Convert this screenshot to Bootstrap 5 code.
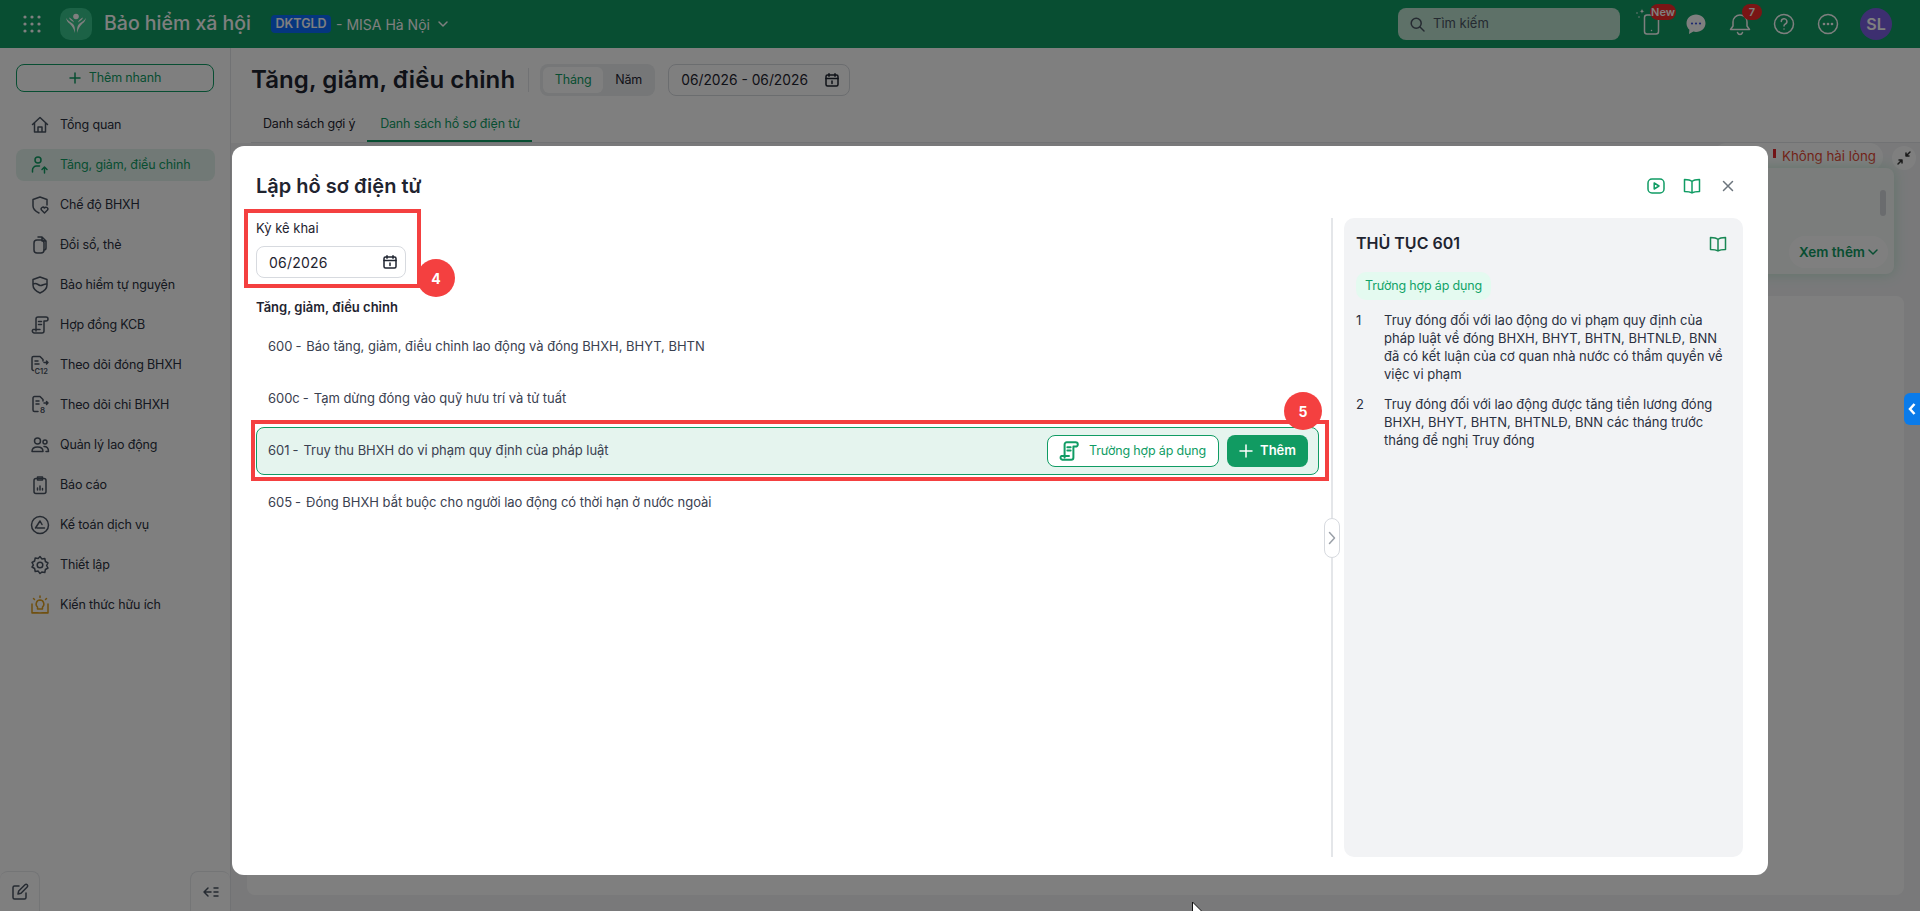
<!DOCTYPE html>
<html lang="vi">
<head>
  <meta charset="UTF-8" />
  <meta name="viewport" content="width=device-width, initial-scale=1.0"/>
  <title>Bảo hiểm xã hội</title>
  <link href="https://cdn.jsdelivr.net/npm/bootstrap@5.3.0/dist/css/bootstrap.min.css" rel="stylesheet">
  <style>
    html, body { height: 100%; overflow: hidden; }
    body { font-family: Inter, "Liberation Sans", sans-serif; font-size: 13px; color: #1f2430; background: #f2f3f5; }
    svg { display: block; flex: none; overflow: visible; }
    .ic { fill: none; stroke: currentColor; stroke-width: 1.5; stroke-linecap: round; stroke-linejoin: round; }
    .ic text { fill: currentColor; stroke: none; font-family: Inter, "Liberation Sans", sans-serif; font-weight: 600; }
    .txt-sm { font-size: 12.5px; letter-spacing: -.15px; white-space: nowrap; }

    .top-bar { height: 48px; background: #109c64; color: #fff; padding: 0 28px 0 23px; }
    .app-name { font-size: 19.5px; font-weight: 500; margin: 0 20px 0 12px; }
    .app-logo { width: 32px; height: 32px; border-radius: 10px; background: #38c48c; margin-left: 19px; }
    .org-tag { background: #0a6cff; border-radius: 4px; font-size: 12.5px; font-weight: 600; line-height: 18px; width: 60px; text-align: center; }
    .org-name { font-size: 14px; margin: 0 8px 0 5px; }
    .search-box { width: 222px; height: 32px; border-radius: 8px; background: #bce2d0; color: #4b5563; padding: 0 12px; gap: 8px; }
    .top-icons { gap: 16px; margin-left: 18px; }
    .top-icon { position: relative; width: 28px; height: 28px; }
    .red-badge { position: absolute; top: -6px; background: #f52a2a; color: #fff; font-size: 11px; font-weight: 600; line-height: 16px; border-radius: 8px; text-align: center; }
    .avatar-sl { width: 32px; height: 32px; border-radius: 50%; background: #7a5fe0; font-size: 16px; font-weight: 600; margin-left: 2px; }

    .side-bar { width: 231px; background: #fff; border-right: 1px solid #e2e4e8; position: relative; padding: 16px 15px 0 16px; }
    .quick-btn { height: 28px; width: 198px; border: 1px solid #109c64; border-radius: 8px; color: #109c64; gap: 8px; margin-bottom: 17px; }
    .side-item { height: 32px; margin-bottom: 8px; padding-left: 16px; gap: 10px; border-radius: 8px; color: #2a3040; }
    .side-item svg { width: 20px; height: 20px; color: #4b5563; margin-left: -2px; }
    .side-item.is-on { background: #e3f3ec; color: #109c64; }
    .side-item.is-on svg { color: #109c64; }
    .side-foot { position: absolute; left: 0; right: 0; bottom: 0; }
    .foot-btn { width: 40px; height: 40px; border: 1px solid #e8eaed; border-bottom: 0; border-radius: 8px 8px 0 0; color: #4b5563; }

    .page-head { height: 95px; background: #fff; padding: 16px 0 0 20px; }
    .page-title { font-size: 24px; font-weight: 600; margin: 0; letter-spacing: .1px; }
    .head-sep { width: 1px; height: 24px; background: #e2e4e8; margin: 0 11px 0 13px; }
    .seg-box { width: 115px; height: 32px; background: #eceef0; border-radius: 8px; padding: 3px; }
    .seg-on { width: 60px; height: 26px; background: #fff; border-radius: 6px; color: #109c64; }
    .seg-off { margin-left: 12px; }
    .range-box { width: 182px; height: 32px; border: 1px solid #d7dadf; border-radius: 8px; margin-left: 13px; padding: 0 10px 0 12px; font-size: 13.8px; }
    .tab-line { margin-top: 12px; border-bottom: 1px solid #e2e4e8; }
    .tab-it { padding: 0 12px; height: 34px; line-height: 32px; }
    .tab-it.is-on { color: #109c64; border-bottom: 2px solid #109c64; width: 165px; text-align: center; }

    .main-area { position: relative; }
    .rate-chip { position: absolute; top: 95px; right: 37px; width: 170px; height: 28px; border-radius: 14px; background: #fff; color: #e5432d; font-size: 13.3px; padding-right: 7px; justify-content: flex-end; gap: 6px; }
    .rate-bar { width: 3px; height: 9px; background: #e5252a; margin-top: -8px; }
    .mini-round { position: absolute; top: 98px; right: 4px; width: 24px; height: 24px; border-radius: 50%; background: #fff; color: #333; }
    .hint-card { position: absolute; top: 120px; right: 26px; width: 600px; height: 106px; border-radius: 8px; background: #f7fbf9; box-shadow: 0 0 14px #bfe8d3; }
    .more-pill { position: absolute; right: 6px; bottom: 6px; width: 99px; height: 32px; border-radius: 16px; background: #fff; color: #109c64; font-size: 13.5px; font-weight: 600; gap: 3px; }
    .mini-scroll { position: absolute; top: 22px; right: 8px; width: 6px; height: 26px; border-radius: 3px; background: #d5d8dc; }
    .list-sheet { position: absolute; top: 248px; left: 16px; right: 16px; bottom: 16px; background: #fff; border-radius: 8px; }

    .dim-layer { position: fixed; inset: 0; background: rgba(0,0,0,.5); }
    .dlg-wrap { position: fixed; left: 232px; top: 146px; width: 1536px; height: 729px; }
    .dlg-box { height: 100%; border: 0; border-radius: 12px; padding: 24px 25px 18px 24px; background: #fff; }
    .dlg-head { height: 32px; margin-bottom: 16px; }
    .dlg-title { font-size: 20px; font-weight: 600; margin: 0; }
    .head-act { gap: 18px; color: #109c64; margin-right: 6px; }
    .form-cap { line-height: 20px; margin-bottom: 8px; margin-top: 0; }
    .date-field { width: 150px; height: 32px; border: 1px solid #d7dadf; border-radius: 8px; padding: 0 8px 0 12px; font-size: 14px; letter-spacing: .2px; }
    .group-cap { font-weight: 600; margin: 19px 0 6px; line-height: 20px; }
    .proc-row { height: 48px; border: 1px solid transparent; border-radius: 8px; padding: 0 10px 0 11px; margin-bottom: 4px; color: #3a4150; letter-spacing: -.03px; }
    .proc-row.is-on { background: #e5f4ee; border-color: #109c64; }
    .proc-dash { margin: 0 5px 0 3px; }
    .law-btn { width: 172px; height: 32px; background: #fff; border: 1px solid #109c64; border-radius: 8px; color: #109c64; gap: 9px; padding-left: 10px; }
    .law-btn svg { stroke-width: 1.8; }
    .add-btn { width: 81px; height: 32px; background: #119b62; border-radius: 8px; color: #fff; font-weight: 600; gap: 7px; margin-left: 8px; }
    .left-col { width: 1063px; }
    .col-split { width: 2px; background: #e4e6e9; margin: 0 11px 0 12px; position: relative; }
    .split-toggle { position: absolute; left: -7px; top: 300px; width: 16px; height: 40px; background: #fff; border: 1px solid #d7dadf; border-radius: 8px; color: #9aa0a8; }
    .info-panel { width: 399px; background: #f2f3f5; border-radius: 10px; padding: 12px; }
    .info-title { font-size: 16px; font-weight: 600; margin: 0; }
    .info-pill { background: #e4faf0; color: #12a368; border-radius: 10px; height: 28px; width: 135px; margin: 14px 0 11px; }
    .info-row { line-height: 18px; margin-bottom: 12px; color: #2a3040; }
    .info-no { width: 28px; flex: none; }

    .mark-box { position: absolute; border: 4px solid #f44040; pointer-events: none; }
    .step-dot { position: absolute; width: 38px; height: 38px; border-radius: 50%; background: #f44040; color: #fff; font-size: 14px; font-weight: 700; }
    .blue-tab { position: fixed; right: 0; top: 393px; width: 16px; height: 32px; background: #0a7bea; border-radius: 6px 0 0 6px; color: #fff; }
    .mouse-arrow { position: fixed; left: 1191px; top: 901px; }
  </style>
</head>
<body class="d-flex flex-column">

<header class="top-bar d-flex align-items-center flex-none">
  <svg width="18" height="18" viewBox="0 0 18 18" fill="currentColor"><circle cx="2" cy="2" r="1.6"/><circle cx="9" cy="2" r="1.6"/><circle cx="16" cy="2" r="1.6"/><circle cx="2" cy="9" r="1.6"/><circle cx="9" cy="9" r="1.6"/><circle cx="16" cy="9" r="1.6"/><circle cx="2" cy="16" r="1.6"/><circle cx="9" cy="16" r="1.6"/><circle cx="16" cy="16" r="1.6"/></svg>
  <div class="app-logo d-flex align-items-center justify-content-center">
    <svg width="20" height="22" viewBox="0 0 20 22" fill="#fff"><circle cx="10" cy="3.500" r="2.800"/><path d="M0 5c1 4 3 5 4 6 2 2 4 5 5 9 0-4 0-7-2-9-2-2-5-3-7-6zM20 5c-1 4-3 5-4 6-2 2-4 5-5 9 0-4 0-7 2-9 2-2 5-3 7-6z"/><path d="M3 4.500c.5 2 2 3 3 3.500l2 1.500C7.500 7 5 5.500 3 4.500zM17 4.500c-.5 2-2 3-3 3.500l-2 1.500C12.500 7 15 5.500 17 4.500z"/></svg>
  </div>
  <div class="app-name">Bảo hiểm xã hội</div>
  <span class="org-tag">DKTGLD</span>
  <span class="org-name">- MISA Hà Nội</span>
  <svg class="ic" width="10" height="6" viewBox="0 0 10 6"><path d="M1 1l4 4 4-4"/></svg>

  <div class="search-box d-flex align-items-center ms-auto">
    <svg class="ic" width="15" height="15" viewBox="0 0 15 15"><circle cx="6.2" cy="6.2" r="5"/><path d="M10 10l4 4"/></svg>
    <span>Tìm kiếm</span>
  </div>
  <div class="top-icons d-flex align-items-center">
    <div class="top-icon">
      <svg class="ic" width="28" height="28" viewBox="0 0 28 28"><rect x="6.500" y="5" width="14" height="19" rx="2.500"/><path d="M13.500 20.500h.01"/><path d="M4 -1.500c.3 2 .7 2.400 2.500 2.700-1.800.3-2.200.7-2.500 2.700-.3-2-.7-2.400-2.500-2.700 1.800-.3 2.200-.7 2.500-2.700z" fill="currentColor" stroke="none"/><path d="M-1 3h.01M1 7h.01"/></svg>
      <span class="red-badge" style="left:12px;width:26px">New</span>
    </div>
    <div class="top-icon d-flex align-items-center justify-content-center">
      <svg width="22" height="22" viewBox="0 0 22 22"><path fill="#fff" d="M11 1.500c5.300 0 9.500 3.800 9.500 8.700s-4.200 8.700-9.500 8.700c-.9 0-1.800-.1-2.600-.3L4 21l.4-4.300C2.600 15.100 1.500 12.800 1.500 10.200 1.500 5.300 5.700 1.500 11 1.500z"/><circle cx="7" cy="10.500" r="1.100" fill="#3a52e0"/><circle cx="11" cy="10.500" r="1.100" fill="#3a52e0"/><circle cx="15" cy="10.500" r="1.100" fill="#3a52e0"/></svg>
    </div>
    <div class="top-icon d-flex align-items-center justify-content-center">
      <svg class="ic" width="22" height="24" viewBox="0 0 22 24"><path d="M11 3a7 7 0 0 0-7 7v4l-2.500 3.500h19L18 14v-4a7 7 0 0 0-7-7zM8.500 20.500c.5 1.500 1.500 2 2.500 2s2-.5 2.500-2"/></svg>
      <span class="red-badge" style="left:16px;width:20px">7</span>
    </div>
    <div class="top-icon d-flex align-items-center justify-content-center">
      <svg class="ic" width="22" height="22" viewBox="0 0 22 22"><circle cx="11" cy="11" r="9.500"/><path d="M8.300 8.500a2.800 2.800 0 1 1 4 2.500c-.9.500-1.300 1-1.300 2M11 16h.01"/></svg>
    </div>
    <div class="top-icon d-flex align-items-center justify-content-center">
      <svg class="ic" width="22" height="22" viewBox="0 0 22 22"><circle cx="11" cy="11" r="9.500"/><circle cx="7" cy="11" r=".6"/><circle cx="11" cy="11" r=".6"/><circle cx="15" cy="11" r=".6"/></svg>
    </div>
    <div class="avatar-sl d-flex align-items-center justify-content-center">SL</div>
  </div>
</header>

<div class="d-flex flex-grow-1 overflow-hidden">
  <aside class="side-bar flex-shrink-0">
    <div class="quick-btn d-flex align-items-center justify-content-center">
      <svg class="ic" width="12" height="12" viewBox="0 0 12 12"><path d="M6 1v10M1 6h10"/></svg>
      <span class="txt-sm">Thêm nhanh</span>
    </div>
    <div id="sideNav"></div>
    <div class="side-foot d-flex justify-content-between">
      <div class="foot-btn d-flex align-items-center justify-content-center border-start-0">
        <svg class="ic" width="18" height="18" viewBox="0 0 18 18"><path d="M8 3H3.500A1.500 1.500 0 0 0 2 4.500v10A1.500 1.500 0 0 0 3.500 16h10a1.500 1.500 0 0 0 1.500-1.500V10"/><path d="M7 11l.7-3L14 1.800a1.500 1.500 0 0 1 2.200 2.200L10 10.300z"/></svg>
      </div>
      <div class="foot-btn d-flex align-items-center justify-content-center border-end-0">
        <svg class="ic" width="16" height="12" viewBox="0 0 16 12"><path d="M5 2L1 6l4 4M1 6h7M11 2h4M11 6h4M11 10h4"/></svg>
      </div>
    </div>
  </aside>

  <main class="main-area flex-grow-1">
    <div class="page-head">
      <div class="d-flex align-items-center">
        <h1 class="page-title">Tăng, giảm, điều chỉnh</h1>
        <span class="head-sep"></span>
        <div class="seg-box d-flex align-items-center txt-sm">
          <div class="seg-on d-flex align-items-center justify-content-center">Tháng</div>
          <div class="seg-off">Năm</div>
        </div>
        <div class="range-box d-flex align-items-center justify-content-between">
          <span>06/2026 - 06/2026</span>
          <svg class="ic" width="14" height="14" viewBox="0 0 14 14"><rect x="1" y="2" width="12" height="11" rx="1.500"/><path d="M1 5.500h12M4 .8v2.400M10 .8v2.400M7 8v2.500"/></svg>
        </div>
      </div>
      <div class="tab-line d-flex txt-sm">
        <div class="tab-it">Danh sách gợi ý</div>
        <div class="tab-it is-on">Danh sách hồ sơ điện tử</div>
      </div>
    </div>
    <div class="rate-chip d-flex align-items-center"><span class="rate-bar"></span><span>Không hài lòng</span></div>
    <div class="mini-round d-flex align-items-center justify-content-center">
      <svg class="ic" width="14" height="14" viewBox="0 0 14 14"><path d="M13 1L9 5M9 2v3h3M1 13l4-4M5 12V9H2"/></svg>
    </div>
    <div class="list-sheet"></div>
    <div class="hint-card">
      <span class="mini-scroll"></span>
      <div class="more-pill d-flex align-items-center justify-content-center">Xem thêm
        <svg class="ic" width="10" height="6" viewBox="0 0 10 6"><path d="M1 1l4 4 4-4"/></svg>
      </div>
    </div>
  </main>
</div>

<div class="dim-layer"></div>
<div class="blue-tab d-flex align-items-center justify-content-center">
  <svg fill="none" stroke="#fff" stroke-width="2.500" width="8" height="12" viewBox="0 0 8 12"><path d="M6.500 1L2 6l4.500 5"/></svg>
</div>

<div class="dlg-wrap">
  <div class="modal-content dlg-box">
    <div class="dlg-head d-flex align-items-center justify-content-between">
      <h2 class="dlg-title">Lập hồ sơ điện tử</h2>
      <div class="head-act d-flex align-items-center">
        <svg class="ic" width="18" height="18" viewBox="0 0 18 18"><rect x="1" y="2" width="16" height="14" rx="4"/><path d="M7.200 6v6l4.800-3z"/></svg>
        <svg class="ic" width="18" height="18" viewBox="0 0 18 18"><path d="M9 4.500C7.500 3 5 2.500 1.500 2.500v12c3.500 0 6 .5 7.500 1.500 1.500-1 4-1.500 7.500-1.500v-12C13 2.500 10.500 3 9 4.500zM9 4.500V16"/></svg>
        <svg class="ic text-secondary" width="18" height="18" viewBox="0 0 18 18"><path d="M4.500 4.500l9 9M13.500 4.500l-9 9"/></svg>
      </div>
    </div>
    <div class="d-flex" style="height:calc(100% - 48px)">
      <div class="left-col flex-shrink-0">
        <p class="form-cap">Kỳ kê khai</p>
        <div class="date-field d-flex align-items-center justify-content-between">
          <span>06/2026</span>
          <svg class="ic" width="14" height="14" viewBox="0 0 14 14"><rect x="1" y="2" width="12" height="11" rx="1.500"/><path d="M1 5.500h12M4 .8v2.400M10 .8v2.400M7 8v2.500"/></svg>
        </div>
        <div class="group-cap">Tăng, giảm, điều chỉnh</div>
        <div id="procList"></div>
      </div>
      <div class="col-split flex-shrink-0">
        <div class="split-toggle d-flex align-items-center justify-content-center">
          <svg class="ic" width="8" height="14" viewBox="0 0 8 14"><path d="M1.500 1.500L6.500 7l-5 5.500"/></svg>
        </div>
      </div>
      <aside class="info-panel flex-shrink-0">
        <div class="d-flex align-items-center justify-content-between" style="height:28px;padding-right:4px">
          <h3 class="info-title">THỦ TỤC 601</h3>
          <svg class="ic text-success" width="18" height="18" viewBox="0 0 18 18"><path d="M9 4.500C7.500 3 5 2.500 1.500 2.500v12c3.500 0 6 .5 7.500 1.500 1.500-1 4-1.500 7.500-1.500v-12C13 2.500 10.500 3 9 4.500zM9 4.500V16"/></svg>
        </div>
        <div class="info-pill d-flex align-items-center justify-content-center txt-sm">Trường hợp áp dụng</div>
        <div class="info-row d-flex"><span class="info-no">1</span><span>Truy đóng đối với lao động do vi phạm quy định của pháp luật về đóng BHXH, BHYT, BHTN, BHTNLĐ, BNN đã có kết luận của cơ quan nhà nước có thẩm quyền về việc vi phạm</span></div>
        <div class="info-row d-flex"><span class="info-no">2</span><span>Truy đóng đối với lao động được tăng tiền lương đóng BHXH, BHYT, BHTN, BHTNLĐ, BNN các tháng trước tháng để nghị Truy đóng</span></div>
      </aside>
    </div>
  </div>
  <!-- callouts sit on top of the dialog -->
  <div class="mark-box" style="left:12px;top:63px;width:177px;height:79px"></div>
  <div class="step-dot d-flex align-items-center justify-content-center" style="left:185px;top:113px">4</div>
  <div class="mark-box" style="left:19px;top:274px;width:1078px;height:61px"></div>
  <div class="step-dot d-flex align-items-center justify-content-center" style="left:1052px;top:246px">5</div>
</div>

<svg class="mouse-arrow" width="14" height="20" viewBox="0 0 14 20"><path d="M1.500 1v14.500l3.500-3.200 2.500 5.500 2.200-1-2.500-5.300H12z" fill="#fff" stroke="#111" stroke-width="1"/></svg>

<script>
// sidebar entries: icon paths are 20x20 strokes
const sideItems = [
  ["Tổng quan", '<path d="M2.500 9.500L10 2.500l7.500 7M4.500 8v9h11V8M8 17v-5h4v5"/>'],
  ["Tăng, giảm, điều chỉnh", '<circle cx="8" cy="5" r="3"/><path d="M2.500 17v-2a4 4 0 0 1 4-4h3M14.500 18v-6M12 14.500l2.500-2.500 2.500 2.500"/>', true],
  ["Chế độ BHXH", '<path d="M10 2l7 2.500V10M10 2L3 4.500V11c0 3.500 3 5.500 6 7"/><path d="M14.500 18l-3-3a1.800 1.800 0 0 1 3-2 1.800 1.800 0 0 1 3 2z"/>'],
  ["Đổi sổ, thẻ", '<rect x="4" y="5" width="10" height="13" rx="3"/><path d="M8 2h4l4 4v7a2 2 0 0 1-2 2M12 2v4h4"/>'],
  ["Bảo hiểm tự nguyện", '<path d="M10 2l7 2.500V10c0 4-3.500 6.500-7 8-3.500-1.500-7-4-7-8V4.500zM3.500 9C6 7 8 10 10 10.500s4.500-2 6.500-1.500"/>'],
  ["Hợp đồng KCB", '<path d="M6 16V4a2 2 0 0 1 2-2h8a2 2 0 0 1 0 4h-2v10a2 2 0 0 1-2 2H4a2 2 0 0 1-1-3.500h7M8.500 6.500h3M8.500 9.500h3"/>'],
  ["Theo dõi đóng BHXH", '<path d="M10 1.500H3.500A1.500 1.500 0 0 0 2 3v11a1.500 1.500 0 0 0 1.500 1.500M10 1.500l3 3v1.500M5 6h3M5 9h4M14 7.500h4M16.500 6L18 7.500 16.500 9"/><text x="4.500" y="18.500" font-size="7.500">C12</text>'],
  ["Theo dõi chi BHXH", '<path d="M10 1.500H4.500A1.500 1.500 0 0 0 3 3v12a1.500 1.500 0 0 0 1.500 1.500H8M10 1.500l3 3v1.500M6 6h3M6 9h3M14 8h4M16.500 6.500L18 8l-1.500 1.500"/><text x="10" y="18" font-size="8">8</text>'],
  ["Quản lý lao động", '<circle cx="7.500" cy="6" r="3"/><circle cx="15" cy="7" r="2"/><path d="M2 16.500c0-3 2.500-4.500 5.500-4.500s5.500 1.500 5.500 4.500zM14 11.500c2.500 0 4.500 1.500 4.500 5H16"/>'],
  ["Báo cáo", '<rect x="4" y="3.500" width="12" height="15" rx="2"/><path d="M7.500 2h5v3h-5zM7.500 15v-2M10 15v-4M12.500 15v-1.500"/>'],
  ["Kế toán dịch vụ", '<circle cx="10" cy="10" r="8.500"/><path d="M5.500 13L10 6l2 3.500M7 13h7.500"/>'],
  ["Thiết lập", '<circle cx="10" cy="10" r="2.800"/><path d="M10 1.500l1.800 2.400 3-.4.600 3 2.600 1.500-1.400 2.500 1.400 2.500-2.600 1.500-.6 3-3-.4L10 18.500l-1.800-2.400-3 .4-.6-3L2 12l1.400-2L2 7.500l2.600-1.500.6-3 3 .4z"/>'],
  ["Kiến thức hữu ích", '<path stroke="#e0a020" d="M10 5a4 4 0 0 0-2.500 7v2h5v-2A4 4 0 0 0 10 5zM10 1v1.500M3.500 3.500l1 1M16.500 3.500l-1 1M2 9v9h16V9M2 17.500c3 0 6 0 8 .5 2-.5 5-.5 8-.5"/>']
];

document.getElementById("sideNav").innerHTML = sideItems.map(it => `
  <div class="side-item d-flex align-items-center ${it[2] ? "is-on" : ""}">
    <svg class="ic" viewBox="0 0 20 20">${it[1]}</svg><span class="txt-sm">${it[0]}</span>
  </div>`).join("");

const procs = [
  ["600", "Báo tăng, giảm, điều chỉnh lao động và đóng BHXH, BHYT, BHTN"],
  ["600c", "Tạm dừng đóng vào quỹ hưu trí và tử tuất"],
  ["601", "Truy thu BHXH do vi phạm quy định của pháp luật", true],
  ["605", "Đóng BHXH bắt buộc cho người lao động có thời hạn ở nước ngoài"]
];

document.getElementById("procList").innerHTML = procs.map(p => `
  <div class="proc-row d-flex align-items-center ${p[2] ? "is-on" : ""}">
    <span>${p[0]}</span><span class="proc-dash">-</span><span>${p[1]}</span>
    ${p[2] ? `<div class="ms-auto d-flex">
      <div class="law-btn d-flex align-items-center">
        <svg class="ic" width="22" height="22" viewBox="0 0 20 20"><path d="M6 16V4a2 2 0 0 1 2-2h8a2 2 0 0 1 0 4h-2v10a2 2 0 0 1-2 2H4a2 2 0 0 1-1-3.500h7M8.500 6.500h3M8.500 9.500h3"/></svg>
        <span class="txt-sm">Trường hợp áp dụng</span>
      </div>
      <div class="add-btn d-flex align-items-center justify-content-center">
        <svg class="ic" width="14" height="14" viewBox="0 0 14 14"><path d="M7 1v12M1 7h12"/></svg><span>Thêm</span>
      </div>
    </div>` : ""}
  </div>`).join("");
</script>
</body>
</html>
